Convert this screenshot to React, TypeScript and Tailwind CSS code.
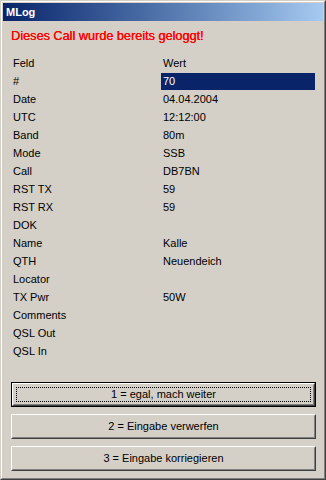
import React from 'react'

interface Row {
  label: string
  value: string
  selected?: boolean
}

const rows: Row[] = [
  { label: 'Feld', value: 'Wert' },
  { label: '#', value: '70', selected: true },
  { label: 'Date', value: '04.04.2004' },
  { label: 'UTC', value: '12:12:00' },
  { label: 'Band', value: '80m' },
  { label: 'Mode', value: 'SSB' },
  { label: 'Call', value: 'DB7BN' },
  { label: 'RST TX', value: '59' },
  { label: 'RST RX', value: '59' },
  { label: 'DOK', value: '' },
  { label: 'Name', value: 'Kalle' },
  { label: 'QTH', value: 'Neuendeich' },
  { label: 'Locator', value: '' },
  { label: 'TX Pwr', value: '50W' },
  { label: 'Comments', value: '' },
  { label: 'QSL Out', value: '' },
  { label: 'QSL In', value: '' },
]

const buttons = ['1 = egal, mach weiter', '2 = Eingabe verwerfen', '3 = Eingabe korriegieren']

function WinButton({ label, isDefault }: { label: string; isDefault?: boolean }) {
  if (isDefault) {
    return (
      <div className="h-[25px] border border-black">
        <div className="h-full border border-t-white border-l-white border-r-[#404040] border-b-[#404040]">
          <div className="h-full p-[2px] border border-t-[#d4d0c8] border-l-[#d4d0c8] border-r-[#808080] border-b-[#808080]">
            <div className="h-full flex items-center justify-center border border-dotted border-black">
              {label}
            </div>
          </div>
        </div>
      </div>
    )
  }
  return (
    <div className="h-[25px] border border-t-white border-l-white border-r-[#404040] border-b-[#404040]">
      <div className="h-full flex items-center justify-center border border-t-[#d4d0c8] border-l-[#d4d0c8] border-r-[#808080] border-b-[#808080]">
        {label}
      </div>
    </div>
  )
}

export default function App() {
  return (
    <div
      className="w-[326px] h-[480px] bg-[#d4d0c8] border border-t-[#d4d0c8] border-l-[#d4d0c8] border-r-[#404040] border-b-[#404040] text-[11px] text-black"
      style={{ fontFamily: '"Liberation Sans", Arial, sans-serif' }}
    >
      <div className="h-full flex flex-col p-px border border-t-white border-l-white border-r-[#808080] border-b-[#808080]">
        {/* Title bar */}
        <div className="h-[18px] shrink-0 flex items-center px-[3px] bg-gradient-to-r from-[#0a246a] to-[#a6caf0]">
          <span className="text-white font-bold text-[11px]">MLog</span>
        </div>

        <div className="flex-1 flex flex-col pl-[8px] pr-[6px]">
          <div className="h-[33px] flex items-center text-[12.7px] text-[#ff0000] [text-shadow:0.3px_0_0_#ff0000] pb-[1px]">
            Dieses Call wurde bereits geloggt!
          </div>

          {/* Field table */}
          <div className="flex flex-col pr-[2px]">
            {rows.map((row) => (
              <div key={row.label} className="h-[18px] flex items-center">
                <div className="w-[150px] shrink-0 pl-[2px]">{row.label}</div>
                <div
                  className={
                    row.selected
                      ? 'flex-1 h-[17px] flex items-center pl-[2px] bg-[#0a246a] text-white'
                      : 'flex-1 pl-[2px]'
                  }
                >
                  {row.value}
                </div>
              </div>
            ))}
          </div>

          {/* Buttons */}
          <div className="mt-auto mb-[6px] flex flex-col gap-[7px] pr-[1px]">
            {buttons.map((b, i) => (
              <WinButton key={b} label={b} isDefault={i === 0} />
            ))}
          </div>
        </div>
      </div>
    </div>
  )
}
